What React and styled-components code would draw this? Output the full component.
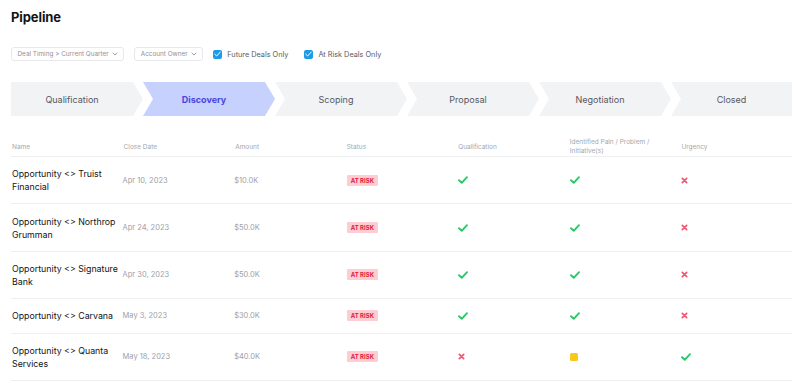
import styled, { createGlobalStyle } from "styled-components";

const GlobalStyle = createGlobalStyle`
  body {
    margin: 0;
    background: #ffffff;
    font-family: Inter, "Noto Sans", sans-serif;
    color: #111318;
  }
`;

const Page = styled.div`
  padding: 9px 8px 0 11px;
`;

const Title = styled.h1`
  margin: 0;
  font-size: 13px;
  line-height: 16px;
  font-weight: 700;
  letter-spacing: -0.1px;
`;

const Filters = styled.div`
  display: flex;
  align-items: center;
  gap: 10px;
  margin-top: 22px;
`;

const Dropdown = styled.div`
  display: flex;
  align-items: center;
  gap: 3px;
  height: 14px;
  padding: 0 5.5px;
  border: 1px solid #e6e8eb;
  border-radius: 3px;
  box-sizing: border-box;
  font-size: 6.4px;
  color: #8d929a;
  white-space: nowrap;
`;

const CheckLabel = styled.label`
  display: flex;
  align-items: center;
  gap: 5px;
  font-size: 7.3px;
  color: #575c64;
  margin-left: ${(p) => p.$offset || 0}px;
`;

const Box = styled.span`
  width: 9px;
  height: 9px;
  border-radius: 2px;
  background: #1d9be6;
  display: flex;
  align-items: center;
  justify-content: center;
`;

const Stepper = styled.div`
  display: flex;
  margin-top: 21px;
  width: 781px;
`;

const Step = styled.div`
  flex: ${(p) => (p.$last ? "1 1 0" : "0 0 132px")};
  height: 34px;
  padding-right: ${(p) => (p.$last ? 0 : 10)}px;
  box-sizing: border-box;
  display: flex;
  align-items: center;
  justify-content: center;
  background: ${(p) => (p.$active ? "#c7d1fd" : "#f2f3f5")};
  color: ${(p) => (p.$active ? "#4b44e0" : "#545861")};
  font-weight: ${(p) => (p.$active ? 700 : 400)};
  font-size: 9px;
  clip-path: ${(p) =>
    p.$first
      ? "polygon(0 0, calc(100% - 10px) 0, 100% 50%, calc(100% - 10px) 100%, 0 100%)"
      : p.$last
      ? "polygon(0 0, 100% 0, 100% 100%, 0 100%, 10px 50%)"
      : "polygon(0 0, calc(100% - 10px) 0, 100% 50%, calc(100% - 10px) 100%, 0 100%, 10px 50%)"};
`;

const Table = styled.div`
  margin-top: 22px;
  width: 781px;
`;

const Row = styled.div`
  display: grid;
  grid-template-columns: repeat(7, 1fr);
  align-items: center;
  border-bottom: 1px solid #eeeff1;
`;

const HeadCell = styled.div`
  padding: 0 8px 0 1px;
  font-size: 6.5px;
  line-height: 9px;
  color: #a3a7ae;
`;

const NameCell = styled.div`
  padding: 10.2px 2px 10.2px 1px;
  font-size: 8.8px;
  line-height: 13px;
  color: #121418;
`;

const MutedCell = styled.div`
  font-size: 7.5px;
  color: #9da1a8;
`;

const IconCell = styled.div`
  display: flex;
  align-items: center;
  padding-left: 1px;
`;

const Badge = styled.span`
  display: inline-block;
  background: #fecdd4;
  color: #e0193f;
  font-size: 6px;
  font-weight: 700;
  line-height: 11px;
  padding: 0 4px;
  border-radius: 1px;
`;

const Square = styled.span`
  width: 8px;
  height: 8px;
  border-radius: 1.5px;
  background: #fac81a;
`;

const Chevron = () => (
  <svg width="6" height="4" viewBox="0 0 6 4">
    <path d="M0.7 0.8 L3 3 L5.3 0.8" fill="none" stroke="#8d929a" strokeWidth="0.9" />
  </svg>
);

const Tick = ({ color = "#fff", w = 7, h = 6, sw = 1.4 }) => (
  <svg width={w} height={h} viewBox="0 0 10 8">
    <path d="M1 4.2 L3.8 6.8 L9 1.2" fill="none" stroke={color} strokeWidth={sw} strokeLinecap="round" strokeLinejoin="round" />
  </svg>
);

const Cross = () => (
  <svg width="7" height="7" viewBox="0 0 8 8">
    <path d="M1.5 1.5 L6.5 6.5 M6.5 1.5 L1.5 6.5" fill="none" stroke="#f0546f" strokeWidth="1.9" strokeLinecap="round" />
  </svg>
);

const Mark = ({ v }) => {
  if (v === "yes") return <Tick color="#2bc76a" w={10} h={8} sw={1.9} />;
  if (v === "no") return <Cross />;
  return <Square />;
};

const steps = ["Qualification", "Discovery", "Scoping", "Proposal", "Negotiation", "Closed"];

const deals = [
  { name: "Opportunity <> Truist Financial", date: "Apr 10, 2023", amount: "$10.0K", q: "yes", p: "yes", u: "no" },
  { name: "Opportunity <> Northrop Grumman", date: "Apr 24, 2023", amount: "$50.0K", q: "yes", p: "yes", u: "no" },
  { name: "Opportunity <> Signature Bank", date: "Apr 30, 2023", amount: "$50.0K", q: "yes", p: "yes", u: "no" },
  { name: "Opportunity <> Carvana", date: "May 3, 2023", amount: "$30.0K", q: "yes", p: "yes", u: "no" },
  { name: "Opportunity <> Quanta Services", date: "May 18, 2023", amount: "$40.0K", q: "no", p: "partial", u: "yes" },
];

export default function App() {
  return (
    <>
      <GlobalStyle />
      <Page>
        <Title>Pipeline</Title>
        <Filters>
          <Dropdown>
            Deal Timing &gt; Current Quarter <Chevron />
          </Dropdown>
          <Dropdown>
            Account Owner <Chevron />
          </Dropdown>
          <CheckLabel>
            <Box><Tick /></Box>
            Future Deals Only
          </CheckLabel>
          <CheckLabel $offset={6}>
            <Box><Tick /></Box>
            At Risk Deals Only
          </CheckLabel>
        </Filters>
        <Stepper>
          {steps.map((s, i) => (
            <Step key={s} $first={i === 0} $last={i === steps.length - 1} $active={s === "Discovery"}>
              {s}
            </Step>
          ))}
        </Stepper>
        <Table>
          <Row>
            <HeadCell>Name</HeadCell>
            <HeadCell>Close Date</HeadCell>
            <HeadCell>Amount</HeadCell>
            <HeadCell>Status</HeadCell>
            <HeadCell>Qualification</HeadCell>
            <HeadCell>Identified Pain / Problem / Initiative(s)</HeadCell>
            <HeadCell>Urgency</HeadCell>
          </Row>
          {deals.map((d) => (
            <Row key={d.name}>
              <NameCell>{d.name}</NameCell>
              <MutedCell>{d.date}</MutedCell>
              <MutedCell>{d.amount}</MutedCell>
              <IconCell><Badge>AT RISK</Badge></IconCell>
              <IconCell><Mark v={d.q} /></IconCell>
              <IconCell><Mark v={d.p} /></IconCell>
              <IconCell><Mark v={d.u} /></IconCell>
            </Row>
          ))}
        </Table>
      </Page>
    </>
  );
}
